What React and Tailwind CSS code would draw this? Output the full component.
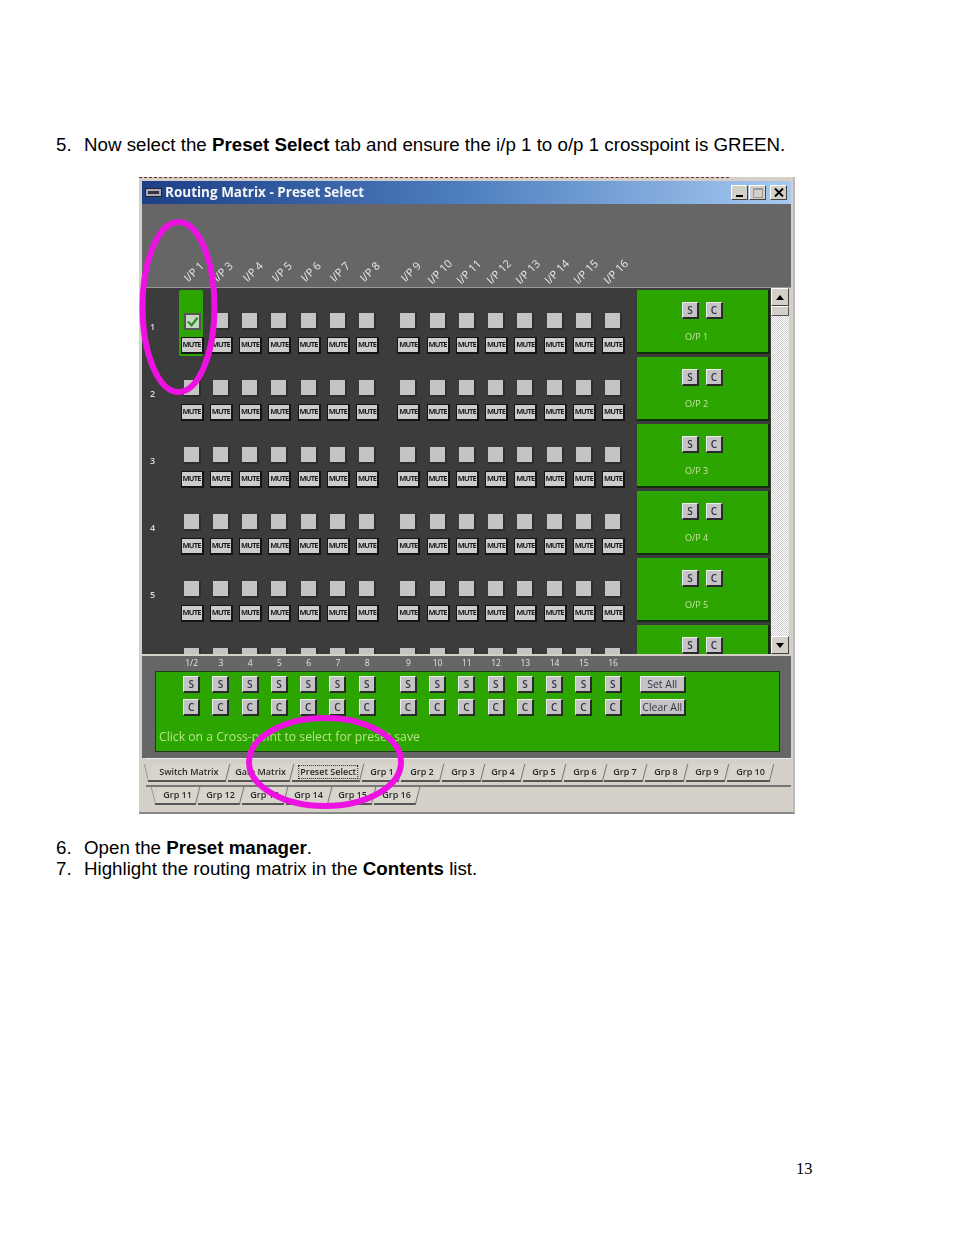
const cols1 = ["1/2", "3", "4", "5", "6", "7", "8"];
const cols2 = ["9", "10", "11", "12", "13", "14", "15", "16"];
const head1 = ["1", "3", "4", "5", "6", "7", "8"];
const ui = { fontFamily: '"Open Sans", "Liberation Sans", sans-serif' };

function Columns({ first, second, render }) {
  return (
    <div className="flex gap-[12px]">
      <div className="flex">{first.map((c, i) => <div key={i} className="flex w-[29.25px] shrink-0 flex-col items-center">{render(c, i)}</div>)}</div>
      <div className="flex">{second.map((c, i) => <div key={i} className="flex w-[29.25px] shrink-0 flex-col items-center">{render(c, i + 7)}</div>)}</div>
    </div>
  );
}

function Raised({ className = "", children }) {
  return (
    <div className={`flex items-center justify-center border border-b-2 border-r-2 border-t-[#eeeeee] border-l-[#eeeeee] border-r-[#2a2a2a] border-b-[#2a2a2a] bg-[#c4c4c4] text-[#333344] ${className}`}>
      {children}
    </div>
  );
}

function SmallBtn({ label }) {
  return <Raised className="h-[17px] w-[17px] text-[10px] font-semibold leading-none">{label}</Raised>;
}

function Cross({ row, col }) {
  const active = row === 0 && col === 0;
  return (
    <div className={`relative flex h-[67px] w-full flex-col items-center pt-[25px] ${active ? "z-0" : ""}`}>
      {active && <div className="absolute left-[1.5px] top-[2px] -z-10 h-[66px] w-[24px] rounded-[2px] bg-[#2ca500]" />}
      <div className={`flex h-[17px] w-[17px] items-center justify-center border-b-2 border-r-2 ${active ? "border-2 border-[#555] bg-[#c8d8c0]" : "border-b-[#2e2e2e] border-r-[#2e2e2e] bg-[#c4c4c4]"}`}>
        {active && (
          <svg viewBox="0 0 14 14" className="h-[13px] w-[13px]">
            <path d="M2 7 L6 11 L12.5 3" fill="none" stroke="#2d8f2a" strokeWidth="2.4" />
          </svg>
        )}
      </div>
      {row < 5 && (
        <div className="mt-[7px] flex h-[17px] w-[23px] items-center justify-center overflow-hidden border border-b-2 border-r-2 border-[#141414] bg-[#cccccc] text-[7.5px] font-bold leading-none tracking-[-0.8px] text-[#1c1c1c]">
          MUTE
        </div>
      )}
    </div>
  );
}

function Row({ row }) {
  return (
    <div className="flex h-[67px] shrink-0">
      <div className="w-[35.5px] shrink-0 pl-[8px] pt-[33px] text-[9px] font-semibold leading-[12px] text-[#dddddd]">{row < 5 ? row + 1 : ""}</div>
      <Columns first={cols1} second={cols2} render={(c, i) => <Cross row={row} col={i} />} />
    </div>
  );
}

function OutPanel({ n }) {
  return (
    <div className="mb-[3px] flex h-[64px] w-[133px] shrink-0 flex-col items-center border-b-2 border-r-2 border-[#10300a] bg-[#2ca500] pt-[12px]">
      <div className="flex gap-[7px]">
        <SmallBtn label="S" />
        <SmallBtn label="C" />
      </div>
      {n < 6 && <div className="mr-[12px] mt-[11px] text-[9px] leading-[14px] text-[#c5e59f]">O/P {n}</div>}
    </div>
  );
}

function Tab({ w, label, active }) {
  return (
    <div style={{ width: w }} className="flex h-[18px] shrink-0 -skew-x-[14deg] items-center justify-center border-b-2 border-r border-[#555] border-r-[#777] bg-[#d8d5cd]">
      <span className={`skew-x-[14deg] whitespace-nowrap text-[9px] font-semibold leading-[12px] text-[#2a2a2a] ${active ? "border border-dotted border-[#222] px-[1px]" : ""}`}>{label}</span>
    </div>
  );
}

function ArrowBtn({ up }) {
  return (
    <div className="flex h-[18px] w-[18px] shrink-0 items-center justify-center border border-b-[#444] border-l-[#fff] border-r-[#444] border-t-[#fff] bg-[#d4d0c8]">
      <svg viewBox="0 0 8 5" className="h-[5px] w-[8px]">
        <path d={up ? "M4 0 L8 5 L0 5 Z" : "M0 0 L8 0 L4 5 Z"} fill="#000" />
      </svg>
    </div>
  );
}

function WinBtn({ children }) {
  return <div className="flex h-[15px] w-[17px] items-center justify-center border border-b-[#444] border-l-[#fff] border-r-[#444] border-t-[#fff] bg-[#d4d0c8]">{children}</div>;
}

function Line({ num, children }) {
  return (
    <div className="flex text-[18.73px] leading-[21px] text-black">
      <div className="w-[28px] shrink-0">{num}</div>
      <div>{children}</div>
    </div>
  );
}

export default function App() {
  return (
    <div className="flex h-[1235px] flex-col bg-white" style={{ fontFamily: '"Liberation Sans", Arial, sans-serif' }}>
      <div className="pl-[56px] pt-[134px]">
        <Line num="5.">Now select the <b>Preset Select</b> tab and ensure the i/p 1 to o/p 1 crosspoint is GREEN.</Line>
      </div>

      <div style={ui} className="relative ml-[139px] mt-[22px] flex h-[637px] w-[656px] shrink-0 flex-col border-b-2 border-r-2 border-b-[#888] border-r-[#bbb] bg-[#d4d0c8] pl-[3px] pr-[2px] pt-[4px] blur-[0.3px]">
        <div className="absolute left-0 top-0 h-[1px] w-[590px] border-t border-dashed border-[#7a2a2a]" />
        <div className="flex h-[23px] shrink-0 items-center bg-gradient-to-r from-[#1d3f86] via-[#4f7fc0] to-[#a6caf0] pl-[3px] pr-[4px]">
          <div className="mr-[3px] flex h-[9px] w-[17px] items-center justify-center border border-[#222] bg-[#aab]">
            <div className="h-[3px] w-[11px] bg-[#334]" />
          </div>
          <div className="text-[13.5px] font-bold leading-none text-[#f4f4f4]">Routing Matrix - Preset Select</div>
          <div className="ml-auto flex items-center gap-[1px]">
            <WinBtn><div className="mt-[7px] h-[2px] w-[7px] bg-black" /></WinBtn>
            <WinBtn><div className="h-[10px] w-[10px] border border-[#999] border-t-2" /></WinBtn>
            <div className="ml-[3px]">
              <WinBtn>
                <svg viewBox="0 0 10 9" className="h-[9px] w-[10px]"><path d="M1 0.5 L9 8.5 M9 0.5 L1 8.5" stroke="#000" strokeWidth="2" /></svg>
              </WinBtn>
            </div>
          </div>
        </div>

        <div className="flex h-[84px] shrink-0 items-end border-b border-[#999] bg-[#666666] pl-[35.5px]">
          <Columns
            first={head1}
            second={cols2}
            render={(c) => (
              <div className="mb-[6px] ml-[2px] flex h-[20px] w-[20px] -rotate-45 items-center justify-center whitespace-nowrap text-[11px] leading-none text-[#e8e8e8]">I/P {c}</div>
            )}
          />
        </div>

        <div className="flex h-[366px] shrink-0 overflow-hidden bg-[#3c3c3c]">
          <div className="flex w-[495px] shrink-0 flex-col">
            {[0, 1, 2, 3, 4, 5].map((r) => <Row key={r} row={r} />)}
          </div>
          <div className="flex w-[134px] shrink-0 flex-col pt-[2px]">
            {[1, 2, 3, 4, 5, 6].map((n) => <OutPanel key={n} n={n} />)}
          </div>
          <div className="flex w-[18px] shrink-0 flex-col bg-[#ededed] bg-[repeating-conic-gradient(#cfcfcf_0_25%,#ffffff_0_50%)] bg-[length:2px_2px]">
            <ArrowBtn up />
            <div className="h-[10px] shrink-0 border border-b-[#555] border-l-[#fff] border-r-[#555] border-t-[#fff] bg-[#d4d0c8]" />
            <div className="flex-1" />
            <ArrowBtn />
          </div>
          <div className="flex-1 bg-[#d4d0c8]" />
        </div>

        <div className="mt-[2px] flex h-[102px] shrink-0 flex-col bg-[#666666] pl-[13px] pr-[11px]">
          <div className="flex h-[15px] shrink-0 items-center pl-[22px]">
            <Columns first={cols1} second={cols2} render={(c) => <div className="text-[8.5px] leading-none text-[#e4e4e4]">{c}</div>} />
          </div>
          <div className="h-[81px] border border-[#1c3c14] bg-[#2ca500]">
            <div className="flex pl-[21px] pt-[4px]">
              <Columns
                first={cols1}
                second={cols2}
                render={() => (
                  <div className="flex flex-col gap-[6px]">
                    <SmallBtn label="S" />
                    <SmallBtn label="C" />
                  </div>
                )}
              />
              <div className="ml-[12px] flex flex-col gap-[6px]">
                <Raised className="h-[17px] w-[46px] text-[10.5px] leading-none">Set All</Raised>
                <Raised className="h-[17px] w-[46px] text-[10.5px] leading-none">Clear All</Raised>
              </div>
            </div>
            <div className="pl-[3px] pt-[13px] text-[12.2px] leading-[16px] text-[#b8e58a]">Click on a Cross-point to select for preset save</div>
          </div>
        </div>

        <div className="flex-1 pl-[4px]">
          <div className="flex gap-[2px] border-t border-[#eee] pt-[5px]">
            <div className="mr-[1px] h-[18px] w-px shrink-0 skew-x-[14deg] bg-[#999]" />
            <Tab w={78} label="Switch Matrix" />
            <Tab w={62} label="Gain Matrix" />
            <Tab w={68} label="Preset Select" active />
            <Tab w={37} label="Grp 1" />
            <Tab w={38.7} label="Grp 2" />
            <Tab w={38.7} label="Grp 3" />
            <Tab w={38.7} label="Grp 4" />
            <Tab w={38.7} label="Grp 5" />
            <Tab w={38.7} label="Grp 6" />
            <Tab w={38.7} label="Grp 7" />
            <Tab w={38.7} label="Grp 8" />
            <Tab w={38.7} label="Grp 9" />
            <Tab w={43} label="Grp 10" />
          </div>
          <div className="mt-[3px] flex gap-[2px] border-t-2 border-[#777] pl-[6.5px]">
            <div className="mr-[1px] h-[18px] w-px shrink-0 skew-x-[14deg] bg-[#999]" />
            <Tab w={41} label="Grp 11" />
            <Tab w={42} label="Grp 12" />
            <Tab w={42} label="Grp 13" />
            <Tab w={42} label="Grp 14" />
            <Tab w={42} label="Grp 15" />
            <Tab w={42} label="Grp 16" />
          </div>
        </div>

        <svg className="pointer-events-none absolute left-0 top-0 h-[637px] w-[656px] overflow-visible" viewBox="0 0 656 637">
          <ellipse cx="39.5" cy="130" rx="36" ry="85" fill="none" stroke="#ee12e2" strokeWidth="6" />
          <ellipse cx="186" cy="585" rx="76" ry="44" fill="none" stroke="#ee12e2" strokeWidth="6" />
        </svg>
      </div>

      <div className="pl-[56px] pt-[23px]">
        <Line num="6.">Open the <b>Preset manager</b>.</Line>
        <Line num="7.">Highlight the routing matrix in the <b>Contents</b> list.</Line>
      </div>

      <div className="ml-[796px] mt-[281px] text-[16.5px] leading-[18px] text-black" style={{ fontFamily: '"Liberation Serif", serif' }}>13</div>
    </div>
  );
}
